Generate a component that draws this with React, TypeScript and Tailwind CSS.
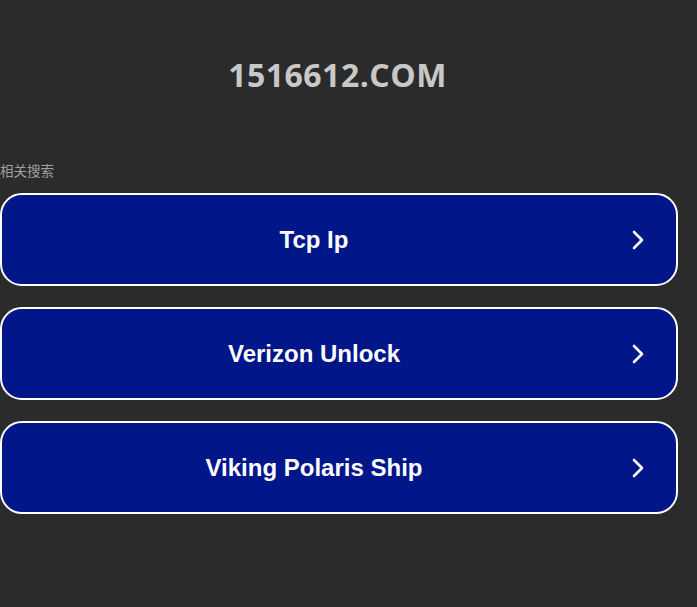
import React from 'react';

const terms = ['Tcp Ip', 'Verizon Unlock', 'Viking Polaris Ship'];

const Chevron: React.FC = () => (
  <svg width="14" height="22" viewBox="0 0 14 22" fill="none">
    <path d="M3 3l8 8-8 8" stroke="white" strokeWidth="2.6" strokeLinecap="round" strokeLinejoin="round" />
  </svg>
);

const App: React.FC = () => {
  return (
    <div className="min-h-[607px] w-full bg-[#2b2b2b]">
      <div className="pt-[54px] text-center text-[32px] leading-[42px] font-bold text-[#c8c8c8] font-['Open_Sans',sans-serif] tracking-[0.5px] pr-[22px]">
        1516612.COM
      </div>
      <div className="mt-[65px] w-[678px]">
        <div className="text-[13.5px] leading-[18px] text-[#a0a0a0] font-['Noto_Sans_CJK_SC',sans-serif]">相关搜索</div>
        <div className="mt-[14px] flex flex-col gap-[21px]">
          {terms.map((t) => (
            <div
              key={t}
              className="h-[93px] flex items-center border-2 border-white rounded-[22px] bg-[#001689] cursor-pointer"
            >
              <span className="flex-1 text-center text-[24px] font-bold text-white font-['Liberation_Sans',Arial,sans-serif]">
                {t}
              </span>
              <span className="w-[50px] flex items-center justify-start pl-[5px]">
                <Chevron />
              </span>
            </div>
          ))}
        </div>
      </div>
    </div>
  );
};

export default App;
